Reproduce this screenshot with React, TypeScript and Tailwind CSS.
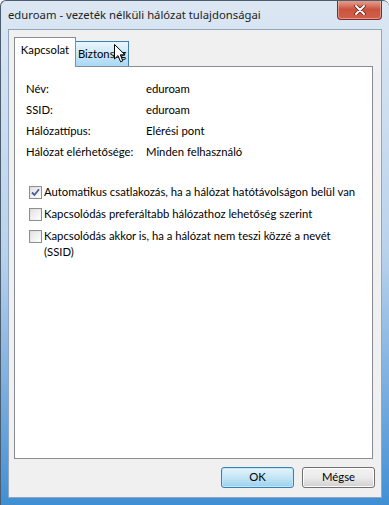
import { useState } from "react";

const titleFont = { fontFamily: '"Segoe UI", "Noto Sans", sans-serif' };
const bodyFont = { fontFamily: '"Segoe UI", Lato, sans-serif' };

function Checkbox({ checked }: { checked: boolean }) {
  return (
    <span className="mt-[2px] flex h-[13px] w-[13px] shrink-0 items-center justify-center border border-[#8e8f8f] bg-gradient-to-br from-[#dcdcdc] to-[#fbfbfb]">
      <span className="flex h-[9px] w-[9px] items-center justify-center bg-gradient-to-br from-[#e4e4e4] to-[#fdfdfd]">
        {checked && (
          <svg width="9" height="9" viewBox="0 0 9 9">
            <path d="M1 4.5 L3.5 7 L8 1.2" fill="none" stroke="#4a5f97" strokeWidth="1.8" />
          </svg>
        )}
      </span>
    </span>
  );
}

export default function App() {
  const [opts] = useState([
    { label: "Automatikus csatlakozás, ha a hálózat hatótávolságon belül van", checked: true, wrap: false },
    { label: "Kapcsolódás preferáltabb hálózathoz lehetőség szerint", checked: false, wrap: false },
    { label: "Kapcsolódás akkor is, ha a hálózat nem teszi közzé a nevét (SSID)", checked: false, wrap: true },
  ]);

  const rows = [
    ["Név:", "eduroam"],
    ["SSID:", "eduroam"],
    ["Hálózattípus:", "Elérési pont"],
    ["Hálózat elérhetősége:", "Minden felhasználó"],
  ];

  return (
    <div
      className="relative flex h-[505px] w-[389px] flex-col overflow-hidden rounded-t-[6px] border-l border-t border-[#4d5d70] bg-gradient-to-b from-[#dce7f3] via-[#b9d2ec] to-[#3f8fd4] text-[11.3px] text-black"
      style={bodyFont}
    >
      <div className="flex h-[28px] shrink-0 items-center pl-[7px] text-[#1e1e1e]" style={titleFont}>
        eduroam - vezeték nélküli hálózat tulajdonságai
      </div>
      <div className="absolute right-[7px] top-[-1px] flex h-[20px] w-[45px] items-center justify-center rounded-b-[4px] border border-t-0 border-[#7a2c2a] bg-gradient-to-b from-[#e8a595] via-[#c9533f] to-[#d5604a] shadow-[inset_0_0_0_1px_rgba(255,255,255,0.35)]">
        <svg width="12" height="10" viewBox="0 0 12 10">
          <path d="M2 1 L10 9 M10 1 L2 9" stroke="#5a1a12" strokeWidth="3.4" strokeLinecap="round" />
          <path d="M2 1 L10 9 M10 1 L2 9" stroke="#ffffff" strokeWidth="2" strokeLinecap="round" />
        </svg>
      </div>

      {/* mouse pointer over the Biztonság tab */}
      <svg className="absolute left-[113px] top-[43px] z-20" width="12" height="19" viewBox="0 0 12 19">
        <path d="M0.5 0.5 L0.5 15 L4 11.6 L6.6 17.8 L8.8 16.9 L6.3 10.8 L11 10.8 Z" fill="#ffffff" stroke="#000000" strokeWidth="1" strokeLinejoin="round" />
      </svg>

      <div className="mx-[7px] mb-[7px] flex flex-1 flex-col border border-[#8fa6bd] bg-[#f0f0f0] px-[5px] pt-[7px]">
        <div className="flex items-end">
          <div className="relative z-10 -mb-px flex h-[30px] w-[62px] items-start justify-center border border-b-0 border-[#898c95] bg-white pt-[4px]">
            Kapcsolat
          </div>
          <div className="flex h-[25px] w-[53px] items-center justify-center whitespace-nowrap border border-b-0 border-l-0 border-[#3c7fb1] bg-gradient-to-b from-[#eaf6fd] to-[#a7d9f5]">
            Biztonság
          </div>
        </div>
        <div className="h-[393px] w-[359px] border border-[#898c95] bg-white px-[11px] pt-[14px]">
          <div className="flex flex-col gap-[5px]">
            {rows.map(([k, v]) => (
              <div key={k} className="flex h-[16px] items-center whitespace-nowrap">
                <span className="w-[120px]">{k}</span>
                <span>{v}</span>
              </div>
            ))}
          </div>
          <div className="mt-[24px] flex flex-col gap-[6px] pl-[3px]">
            {opts.map((o) => (
              <div key={o.label} className="flex items-start gap-[2px] leading-[16px]">
                <Checkbox checked={o.checked} />
                <span className={o.wrap ? "w-[296px]" : "whitespace-nowrap"}>{o.label}</span>
              </div>
            ))}
          </div>
        </div>
        <div className="flex justify-end gap-[8px] pr-[1px] pt-[8px]">
          <button className="h-[21px] w-[73px] rounded-[3px] border border-[#3c7fb1] bg-gradient-to-b from-[#e5f4fc] via-[#c4e5f6] to-[#98d1ef] shadow-[inset_0_0_0_1px_#bfe6fa]">
            OK
          </button>
          <button className="h-[21px] w-[73px] rounded-[3px] border border-[#707070] bg-gradient-to-b from-[#f2f2f2] via-[#ebebeb] to-[#cfcfcf] shadow-[inset_0_0_0_1px_#fcfcfc]">
            Mégse
          </button>
        </div>
      </div>
    </div>
  );
}
